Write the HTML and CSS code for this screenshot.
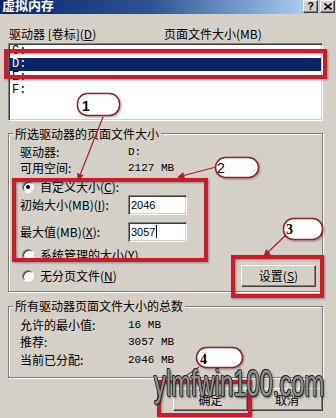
FILE: index.html
```html
<!DOCTYPE html>
<html>
<head>
<meta charset="utf-8">
<link rel="stylesheet" href="styles.css">
</head>
<body>
<div class="dialog">
  <div class="titlebar">
    <span class="title">虚拟内存</span>
    <div class="tbtns">
      <span class="tbtn">?</span>
      <span class="tbtn"><svg width="8" height="7" viewBox="0 0 8 7"><path d="M0.5 0.5 L7.5 6.5 M7.5 0.5 L0.5 6.5" stroke="#000" stroke-width="1.6"/></svg></span>
    </div>
  </div>
  <div class="content">
    <div class="listhead">
      <span class="col1">驱动器 [卷标](<u>D</u>)</span>
      <span class="col2">页面文件大小(MB)</span>
    </div>
    <div class="listbox">
      <div class="row">C:</div>
      <div class="row sel">D:</div>
      <div class="row">E:</div>
      <div class="row">F:</div>
    </div>

    <div class="group g1">
      <div class="legend">所选驱动器的页面文件大小</div>
      <div class="kv first"><span class="k">驱动器:</span><span class="v">D:</span></div>
      <div class="kv kv2"><span class="k">可用空间:</span><span class="v">2127 MB</span></div>
      <div class="radio r1"><span class="dot on"></span><span>自定义大小(<u>C</u>):</span></div>
      <div class="field f1"><span class="k">初始大小(MB)(<u>I</u>):</span><span class="input">2046</span></div>
      <div class="field f2"><span class="k">最大值(MB)(<u>X</u>):</span><span class="input">3057<span class="caret"></span></span></div>
      <div class="radio r2"><span class="dot"></span><span>系统管理的大小(<u>Y</u>)</span></div>
      <div class="lastrow">
        <div class="radio"><span class="dot"></span><span>无分页文件(<u>N</u>)</span></div>
        <span class="btn set">设置(<u>S</u>)</span>
      </div>
    </div>

    <div class="group g2">
      <div class="legend">所有驱动器页面文件大小的总数</div>
      <div class="kv t1"><span class="k">允许的最小值:</span><span class="v">16 MB</span></div>
      <div class="kv t2"><span class="k">推荐:</span><span class="v">3057 MB</span></div>
      <div class="kv t3"><span class="k">当前已分配:</span><span class="v">2046 MB</span></div>
    </div>

    <div class="buttons">
      <span class="btn ok">确定</span>
      <span class="btn cancel">取消</span>
    </div>
  </div>
</div>

<svg class="notes" width="336" height="418" viewBox="0 0 336 418">
  <defs>
    <filter id="sh" x="-20%" y="-20%" width="140%" height="140%">
      <feDropShadow dx="1" dy="1" stdDeviation="1" flood-color="#000" flood-opacity="0.35"/>
    </filter>
    <marker id="ah" viewBox="0 0 10 10" refX="9" refY="5" markerWidth="10" markerHeight="7" markerUnits="userSpaceOnUse" orient="auto">
      <path d="M0 0 L10 5 L0 10 z" fill="#b0202c"/>
    </marker>
  </defs>
  <g fill="none" stroke="#cc1f2c" stroke-width="4" filter="url(#sh)">
    <rect x="6" y="51" width="319" height="26"/>
    <rect x="14" y="180" width="192" height="80"/>
    <rect x="233" y="257" width="89" height="39"/>
    <rect x="159" y="382" width="91" height="33"/>
  </g>
  <g stroke="#a02430" stroke-width="1.2" marker-end="url(#ah)">
    <line x1="103" y1="117" x2="78" y2="180"/>
    <line x1="216" y1="167" x2="178" y2="177"/>
    <line x1="286" y1="235" x2="264" y2="256"/>
    <line x1="199" y1="367" x2="177" y2="382"/>
  </g>
  <g fill="#fff" stroke="#8a2030" stroke-width="1.5" filter="url(#sh)">
    <rect x="77.5" y="93.5" width="42" height="22" rx="10"/>
    <rect x="215.5" y="157.5" width="43" height="20" rx="10"/>
    <rect x="283.5" y="218.5" width="39" height="21" rx="10"/>
    <rect x="196.5" y="347.5" width="46" height="20" rx="10"/>
  </g>
  <text x="82" y="111" class="n sans b">1</text>
  <text x="217" y="173" class="n sans">2</text>
  <text x="286" y="234" class="n serif b">3</text>
  <text x="200" y="364" class="n serif b">4</text>
</svg>

<div class="watermark">ylmfwin100.com</div>
</body>
</html>
```

FILE: styles.css
```css
* { box-sizing: border-box; margin: 0; padding: 0; }
html, body { width: 336px; height: 418px; overflow: hidden; }
body {
  background: #d4d0c8;
  font: 12px/14px "Noto Sans CJK SC", sans-serif;
  color: #000;
  position: relative;
}
u { text-decoration: underline; text-underline-offset: 1px; }

.titlebar {
  height: 14px;
  display: flex;
  justify-content: space-between;
  background: linear-gradient(to right, #0a246a 0%, #2d5596 45%, #a6caf0 90%, #b4d2f2 100%);
}
.title {
  color: #fff;
  font: bold 13px/10px "Noto Sans CJK SC", sans-serif;
  padding-left: 2px;
}
.tbtns { display: flex; gap: 2px; padding-right: 1px; }
.tbtn {
  width: 15px;
  height: 13px;
  background: #d4d0c8;
  border: 1px solid;
  border-color: #fff #404040 #404040 #fff;
  box-shadow: inset -1px -1px #808080;
  display: flex;
  align-items: center;
  justify-content: center;
  font: bold 11px/1 "Liberation Sans", sans-serif;
}

.content { padding: 13px 13px 0 8px; }

.listhead { display: flex; height: 14px; }
.col1 { width: 156px; padding-left: 1px; }

.listbox {
  margin-top: 2px;
  height: 78px;
  background: #fff;
  border: 1px solid;
  border-color: #808080 #fff #fff #808080;
  box-shadow: inset 1px 1px #404040, inset -1px -1px #d4d0c8;
  padding: 1px;
}
.row {
  height: 13px;
  line-height: 13px;
  padding-left: 2px;
  font: 12px/13px "Liberation Mono", monospace;
}
.row.sel { background: #0a246a; color: #fff; }

.group {
  border: 1px solid #808080;
  box-shadow: inset 1px 1px #fff, 1px 1px #fff;
  display: flex;
  flex-direction: column;
  padding: 0 6px 0 11px;
}
.g1 { margin-top: 12px; padding-bottom: 4px; }
.g2 { margin-top: 14px; padding-bottom: 10px; }
.legend {
  align-self: flex-start;
  margin: -7px 0 0 -7px;
  padding: 0 2px;
  background: #d4d0c8;
  height: 14px;
}
.g2 .legend { margin-top: -8px; }

.kv { display: flex; height: 14px; }
.k { width: 108px; flex: none; }
.v { font-family: "Liberation Mono", monospace; font-size: 11px; }
.first { margin-top: 4px; }
.kv2 { margin-top: 2px; }
.t1 { margin-top: 5px; }
.t2 { margin-top: 3px; }
.t3 { margin-top: 4px; }

.radio { display: flex; align-items: center; gap: 6px; height: 14px; padding-left: 2px; }
.dot {
  width: 12px;
  height: 12px;
  border-radius: 50%;
  background: #fff;
  border: 1px solid;
  border-color: #808080 #fff #fff #808080;
  box-shadow: inset 1px 1px #404040;
  display: flex;
  align-items: center;
  justify-content: center;
}
.dot.on::after {
  content: "";
  width: 4px;
  height: 4px;
  border-radius: 50%;
  background: #000;
}
.r1 { margin-top: 5px; }
.r2 { margin-top: 6px; }

.field { display: flex; align-items: center; height: 20px; }
.f1 { margin-top: 1px; }
.f2 { margin-top: 7px; }
.input {
  width: 59px;
  height: 20px;
  background: #fff;
  border: 1px solid;
  border-color: #808080 #fff #fff #808080;
  box-shadow: inset 1px 1px #404040, inset -1px -1px #d4d0c8;
  padding: 2px 0 0 2px;
  font: 11px/14px "Liberation Sans", sans-serif;
  display: flex;
  align-items: flex-start;
}
.caret {
  width: 1px;
  height: 13px;
  margin-left: 1px;
  background: #000;
}

.lastrow {
  margin-top: 3px;
  height: 22px;
  display: flex;
  justify-content: space-between;
  align-items: center;
}

.btn {
  height: 22px;
  width: 75px;
  background: #d4d0c8;
  border: 1px solid;
  border-color: #fff #404040 #404040 #fff;
  box-shadow: inset -1px -1px #808080;
  display: flex;
  align-items: center;
  justify-content: center;
}

.buttons {
  margin-top: 10px;
  display: flex;
  justify-content: flex-end;
  gap: 3px;
}
.buttons .btn { height: 23px; }
.buttons .cancel { width: 72px; }

.notes { position: absolute; left: 0; top: 0; pointer-events: none; }
.n { font-size: 14px; fill: #000; }
.sans { font-family: "Liberation Sans", sans-serif; }
.serif { font-family: "Liberation Serif", serif; }
.b { font-weight: bold; }

.watermark {
  position: absolute;
  left: 154px;
  top: 371px;
  font: 36px/26px "Liberation Sans", sans-serif;
  color: #909090;
  white-space: nowrap;
  transform: scaleX(0.66);
  transform-origin: 0 0;
  text-shadow: 1px 0 0 #2a2a2a, -1px 0 0 #2a2a2a, 0 1px 0 #2a2a2a, 0 -1px 0 #2a2a2a, 1px 1px 0 #2a2a2a, -1px -1px 0 #2a2a2a, 2px 2px 3px #444;
}
```
